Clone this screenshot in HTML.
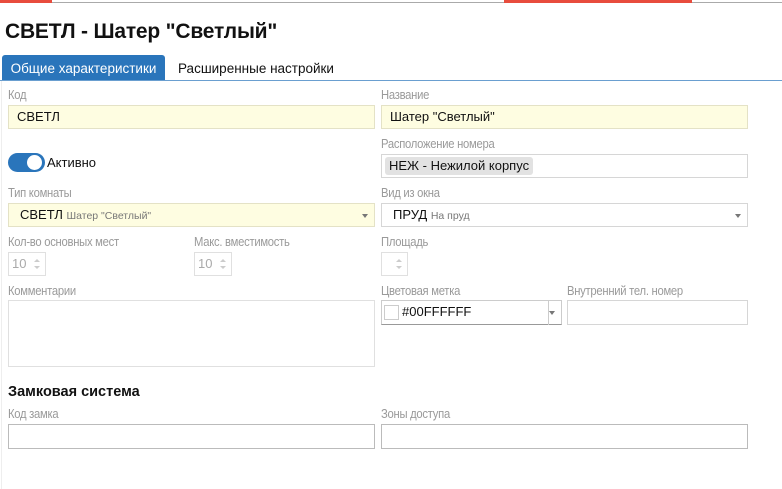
<!DOCTYPE html>
<html><head><meta charset="utf-8"><style>
*{box-sizing:border-box;margin:0;padding:0}
body{width:782px;height:489px;background:#fff;position:relative;overflow:hidden;font-family:"Liberation Sans","DejaVu Sans",sans-serif;color:#111}
.a{position:absolute}
.lbl{position:absolute;font-size:12.5px;color:#9a9a9a;letter-spacing:-0.3px;transform:scaleX(.9);transform-origin:left}
.in{position:absolute;border:1px solid #d6d6d6;background:#fff;font-size:13px;padding-left:8px;line-height:22px}
.y{background:#fefde1;border-color:#e4e2c6}
.arr{position:absolute;right:6px;top:10px;width:0;height:0;border-left:3px solid transparent;border-right:3px solid transparent;border-top:4px solid #777}
.sp{position:absolute;border:1px solid #e0e0e0;font-size:13px;color:#aaa;padding-left:3px;line-height:22px}
.sp:after{content:"";position:absolute;right:5px;top:6px;border-left:3px solid transparent;border-right:3px solid transparent;border-bottom:3px solid #ccc}
.sp:before{content:"";position:absolute;right:5px;top:13px;border-left:3px solid transparent;border-right:3px solid transparent;border-top:3px solid #ccc}
</style></head><body>
<div class="a" style="left:0;top:2px;width:782px;height:1px;background:#aaa"></div>
<div class="a" style="left:0;top:0;width:52px;height:3px;background:#e84c3d"></div>
<div class="a" style="left:504px;top:0;width:188px;height:3px;background:#e84c3d"></div>
<div class="a" style="left:5px;top:20px;font-size:21px;font-weight:bold;letter-spacing:-0.2px">СВЕТЛ - Шатер "Светлый"</div>
<div class="a" style="left:2px;top:55px;width:163px;height:26px;background:#2a75bb;border-radius:3px 3px 0 0;color:#fff;font-size:13.5px;line-height:27px;text-align:center">Общие характеристики</div>
<div class="a" style="left:178px;top:55px;font-size:13.5px;line-height:27px">Расширенные настройки</div>
<div class="a" style="left:0;top:80px;width:782px;height:1px;background:#6a9fd0"></div>
<div class="a" style="left:1px;top:81px;width:1px;height:408px;background:#eee"></div>

<div class="lbl" style="left:8px;top:88px">Код</div>
<div class="in y" style="left:8px;top:105px;width:367px;height:24px">СВЕТЛ</div>
<div class="lbl" style="left:381px;top:88px">Название</div>
<div class="in y" style="left:381px;top:105px;width:367px;height:24px">Шатер "Светлый"</div>

<div class="a" style="left:8px;top:153px;width:37px;height:19px;border-radius:10px;background:#2a75bb"></div>
<div class="a" style="left:27px;top:155px;width:15px;height:15px;border-radius:50%;background:#fff"></div>
<div class="a" style="left:47px;top:155px;font-size:13px">Активно</div>

<div class="lbl" style="left:381px;top:137px">Расположение номера</div>
<div class="in" style="left:381px;top:154px;width:367px;height:24px;padding-left:3px"><span style="display:inline-block;background:#e2e2e2;border-radius:3px;padding:0 4px;line-height:18px;margin-top:2px;vertical-align:top">НЕЖ - Нежилой корпус</span></div>

<div class="lbl" style="left:8px;top:186px">Тип комнаты</div>
<div class="in y" style="left:8px;top:203px;width:367px;height:24px;padding-left:11px">СВЕТЛ <span style="font-size:10.5px;color:#777">Шатер "Светлый"</span><i class="arr"></i></div>
<div class="lbl" style="left:381px;top:186px">Вид из окна</div>
<div class="in" style="left:381px;top:203px;width:367px;height:24px;padding-left:11px">ПРУД <span style="font-size:10.5px;color:#777">На пруд</span><i class="arr"></i></div>

<div class="lbl" style="left:8px;top:235px">Кол-во основных мест</div>
<div class="sp" style="left:8px;top:252px;width:38px;height:24px">10</div>
<div class="lbl" style="left:194px;top:235px">Макс. вместимость</div>
<div class="sp" style="left:194px;top:252px;width:38px;height:24px">10</div>
<div class="lbl" style="left:381px;top:235px">Площадь</div>
<div class="sp" style="left:381px;top:252px;width:27px;height:24px"></div>

<div class="lbl" style="left:8px;top:284px">Комментарии</div>
<div class="in" style="left:8px;top:300px;width:367px;height:67px;border-color:#e0e0e0"></div>
<div class="lbl" style="left:381px;top:284px">Цветовая метка</div>
<div class="in" style="left:381px;top:300px;width:181px;height:25px;padding-left:20px;border-color:#ccc;border-bottom-color:#999">#00FFFFFF<i class="arr"></i></div>
<div class="a" style="left:384px;top:305px;width:15px;height:15px;border:1px solid #ccc"></div>
<div class="a" style="left:548px;top:300px;width:1px;height:25px;background:#ccc"></div>
<div class="lbl" style="left:567px;top:284px">Внутренний тел. номер</div>
<div class="in" style="left:567px;top:300px;width:181px;height:25px"></div>

<div class="a" style="left:8px;top:384px;font-size:14.5px;font-weight:bold">Замковая система</div>
<div class="lbl" style="left:8px;top:407px">Код замка</div>
<div class="in" style="left:8px;top:424px;width:367px;height:25px;border-color:#bbb"></div>
<div class="lbl" style="left:381px;top:407px">Зоны доступа</div>
<div class="in" style="left:381px;top:424px;width:367px;height:25px;border-color:#bbb"></div>
</body></html>
